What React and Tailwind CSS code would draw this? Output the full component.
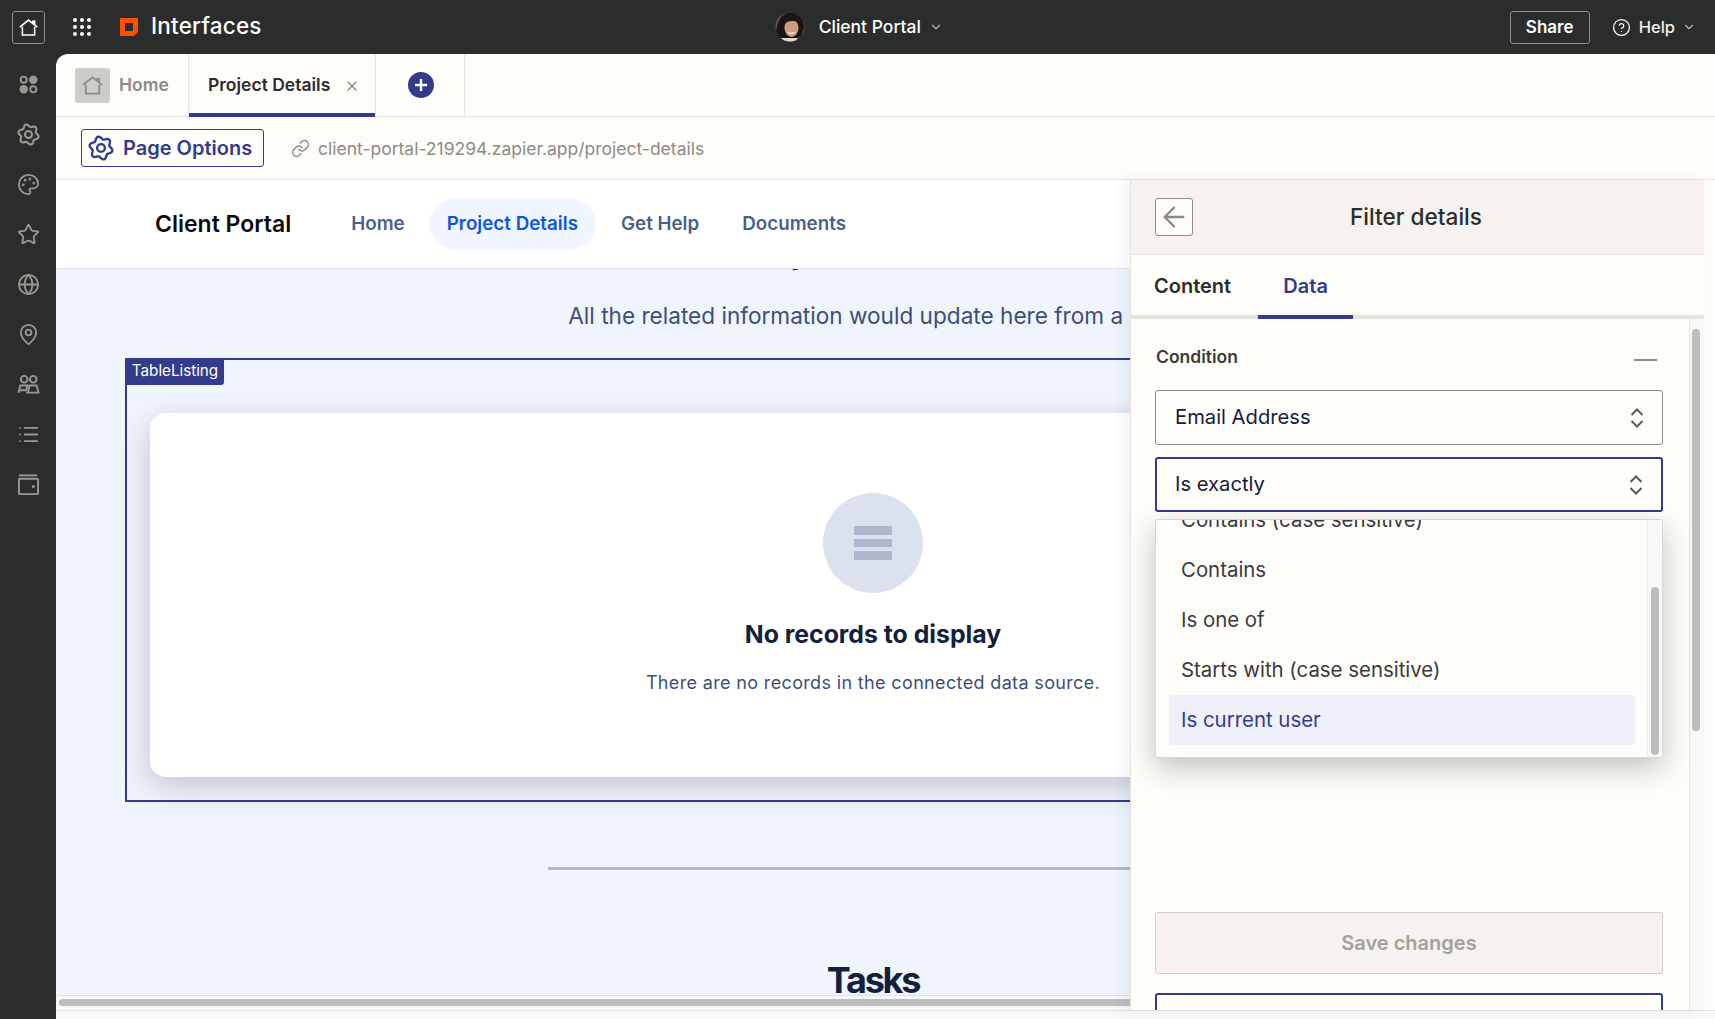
import React from 'react';
import { X, Palette, Star, Globe, MapPin, List, Link, ChevronDown, CircleHelp, ArrowLeft } from 'lucide-react';

// wavy six lobe outline, same cog in the sidebar and on Page Options
const gearPath = (() => {
  const pts = [];
  for (let i = 0; i < 96; i++) {
    const a = (i / 96) * Math.PI * 2;
    const r = 9.4 + 1.4 * Math.cos(6 * a + Math.PI / 2 * 3);
    pts.push(`${(12 + r * Math.cos(a)).toFixed(2)} ${(12 + r * Math.sin(a)).toFixed(2)}`);
  }
  return `M${pts.join('L')}Z`;
})();

const GearIcon = ({ className }) => (
  <svg viewBox="0 0 24 24" fill="none" stroke="currentColor" strokeWidth="2.2" strokeLinejoin="round" className={className}>
    <path d={gearPath} />
    <circle cx="12" cy="12" r="3.6" />
  </svg>
);

const HomeIcon = ({ className }) => (
  <svg viewBox="0 0 24 24" fill="none" stroke="currentColor" strokeWidth="1.8" strokeLinejoin="miter" className={className}>
    <path d="M5 11v9.5h14V11" />
    <path d="M2 11.5 12 3.5l5 4V5h2v4l3 2.5" />
  </svg>
);

const AppsIcon = ({ className }) => (
  <svg viewBox="0 0 24 24" className={className}>
    <circle cx="7" cy="7" r="3.2" fill="none" stroke="currentColor" strokeWidth="2" />
    <circle cx="17" cy="7" r="4.4" fill="currentColor" />
    <circle cx="7" cy="17" r="4.4" fill="currentColor" />
    <circle cx="17" cy="17" r="3.2" fill="none" stroke="currentColor" strokeWidth="2" />
  </svg>
);

const PeopleIcon = ({ className }) => (
  <svg viewBox="0 0 24 24" fill="none" stroke="currentColor" strokeWidth="2" className={className}>
    <circle cx="7.5" cy="6.5" r="3.5" />
    <circle cx="17" cy="6.5" r="3.5" />
    <path d="M1.5 20.5 3.5 13h7.5l-1.5 5H3" />
    <path d="M9.5 20.5h13L20.5 13H13l-1.5 7" />
  </svg>
);

const WalletIcon = ({ className }) => (
  <svg viewBox="0 0 24 24" fill="none" stroke="currentColor" strokeWidth="2" className={className}>
    <path d="M2 2.5h19" />
    <rect x="2" y="6" width="20" height="16" rx="1" />
    <circle cx="17" cy="14" r="1.6" fill="currentColor" stroke="none" />
  </svg>
);

const ZapierLogo = () => (
  <svg viewBox="0 0 18 18" className="w-[18px] h-[18px]">
    <path fill="#ff4f00" d="M0 0h18v14l-4 4H0z" />
    <rect x="5" y="5" width="8" height="8" fill="#2b2d2c" />
  </svg>
);

const Avatar = () => (
  <svg viewBox="0 0 30 30" className="w-[30px] h-[30px] shrink-0">
    <defs>
      <clipPath id="avatarClip"><circle cx="15" cy="15" r="14.5" /></clipPath>
    </defs>
    <g clipPath="url(#avatarClip)">
      <rect width="30" height="30" fill="#59605d" />
      <path d="M1 28C0 12 5 1 16 0c10 0 13 8 13 16l-3 9-22 5z" fill="#1d1413" />
      <ellipse cx="16.5" cy="16" rx="7" ry="9" fill="#cf9c82" />
      <path d="M9 12c3-3 9-4 14-2l-2-6H11z" fill="#1d1413" />
      <path d="M12.5 19.5c2 1.5 6 1.5 8 0-1 3.6-7 3.6-8 0z" fill="#f6efea" />
      <rect x="6" y="26" width="16" height="5" fill="#dcd8d4" />
    </g>
  </svg>
);

const UpDown = () => (
  <svg viewBox="0 0 14 22" fill="none" stroke="#5c5b58" strokeWidth="2" className="w-[14px] h-[22px] shrink-0">
    <path d="M1.5 8 7 2.5 12.5 8" />
    <path d="M1.5 14 7 19.5 12.5 14" />
  </svg>
);

const sideIcons = [AppsIcon, GearIcon, Palette, Star, Globe, MapPin, PeopleIcon, List, WalletIcon];
const options = ['Contains (case sensitive)', 'Contains', 'Is one of', 'Starts with (case sensitive)'];

const TopBar = () => (
  <div className="h-[54px] shrink-0 flex items-center text-white relative">
    <div className="ml-3 w-[33px] h-[33px] border border-[#8f8e8a] rounded-[3px] flex items-center justify-center">
      <HomeIcon className="w-[21px] h-[21px]" />
    </div>
    <div className="ml-7 grid grid-cols-3 gap-[3px] w-[18px]">
      {Array.from({ length: 9 }).map((_, i) => (
        <span key={i} className="w-1 h-1 rounded-full bg-white" />
      ))}
    </div>
    <div className="ml-[29px]"><ZapierLogo /></div>
    <span className="ml-[13px] -mt-[3px] text-[22.5px] font-medium tracking-[0.2px]">Interfaces</span>
    <div className="ml-[513px] flex items-center">
      <Avatar />
      <span className="ml-[14px] mt-px text-[17.5px] font-medium">Client Portal</span>
      <ChevronDown size={14} className="ml-2 text-[#b5b3ae]" />
    </div>
    <div className="ml-auto flex items-center pr-[19px]">
      <div className="w-[80px] h-[33px] pt-px border border-[#8f8e8a] rounded-[3px] flex items-center justify-center text-[17px] font-semibold">Share</div>
      <CircleHelp size={19} strokeWidth={1.6} className="ml-[22px]" />
      <span className="ml-2 text-[16.5px] font-medium text-[#f1efeb]">Help</span>
      <ChevronDown size={14} className="ml-[7px] text-[#b5b3ae]" />
    </div>
  </div>
);

const Sidebar = () => (
  <div className="w-[56px] shrink-0 flex flex-col items-center pt-[19px] gap-[27px] pl-px">
    {sideIcons.map((Icon, i) => (
      <Icon key={i} className="w-[23px] h-[23px] text-[#9b9892]" strokeWidth={1.9} />
    ))}
  </div>
);

const PageTabs = () => (
  <div className="h-[63px] shrink-0 flex border-b border-[#e4e3df]">
    <div className="w-[133px] flex items-center border-r border-[#e4e3df] pl-[19px]">
      <div className="w-[35px] h-[35px] bg-[#cdccc9] rounded-[3px] flex items-center justify-center text-[#8c8b88]">
        <HomeIcon className="w-[23px] h-[23px]" />
      </div>
      <span className="ml-[9px] text-[17.5px] font-semibold text-[#8c8b88]">Home</span>
    </div>
    <div className="w-[186px] flex items-center border-b-4 border-[#343b8a] pl-[19px] pt-1 -mb-px">
      <span className="text-[17.5px] font-semibold text-[#2b2d2c]">Project Details</span>
      <X size={16} strokeWidth={2} className="ml-[14px] text-[#8c8b88]" />
    </div>
    <div className="w-[90px] flex items-center justify-center border-l border-r border-[#e4e3df] pl-px">
      <div className="w-[26px] h-[26px] rounded-full bg-[#343b8a] flex items-center justify-center text-white">
        <svg viewBox="0 0 14 14" className="w-[14px] h-[14px]"><path d="M7 1v12M1 7h12" stroke="currentColor" strokeWidth="2.4" /></svg>
      </div>
    </div>
  </div>
);

const OptionsRow = () => (
  <div className="h-[63px] shrink-0 flex items-center border-b border-[#e4e3df] pl-[25px]">
    <div className="w-[183px] h-[38px] border-[1.5px] border-[#343b8a] rounded-[3px] flex items-center pl-[6px] text-[#343b8a]">
      <GearIcon className="w-[26px] h-[26px]" />
      <span className="ml-[9px] text-[20px] font-semibold">Page Options</span>
    </div>
    <Link size={19} strokeWidth={2} className="ml-[27px] text-[#97958f]" />
    <span className="ml-[8px] mt-[3px] text-[17.5px] text-[#8c8b88]">client-portal-219294.zapier.app/project-details</span>
  </div>
);

const SiteNav = () => (
  <div className="h-[89px] shrink-0 bg-white border-b border-[#dde3ee] flex items-center pl-[99px] text-[18.8px] font-semibold text-[#4a5f8a]">
    <span className="text-[23px] text-[#0b0b0b] mr-[60px]">Client Portal</span>
    <span>Home</span>
    <span className="ml-[24px] h-[50px] px-[18px] rounded-full bg-[#f0f5ff] text-[#0b57e0] flex items-center">Project Details</span>
    <span className="ml-[25px]">Get Help</span>
    <span className="ml-[43px]">Documents</span>
  </div>
);

const PageContent = () => (
  <div className="flex-1 min-h-0 overflow-hidden bg-[#f0f4fc]">
    <div className="w-[1634px] text-center text-[#14213d]">
      <h1 className="-mt-[41px] pr-[22px] text-[36px] leading-[44px] font-bold">Project Details</h1>
      <p className="mt-7 pr-[18px] text-[22.6px] leading-8 text-[#3b4f7a]">All the related information would update here from a list</p>

      <div className="relative mt-[26px] ml-[69px] w-[1496px] h-[444px] border-2 border-[#343b8a] pt-[53px] pl-[23px] pr-[23px]">
        <div className="absolute -top-0.5 -left-0.5 w-[99px] h-[27px] pl-px bg-[#343b8a] rounded-br-[3px] flex items-center justify-center text-[15.2px] text-white">TableListing</div>
        <div className="h-[364px] bg-white rounded-[16px] shadow-[-2px_10px_30px_rgba(30,40,70,0.22)] pt-[80px] flex flex-col items-center">
          <div className="w-[100px] h-[100px] rounded-full bg-[#dce1ee] flex flex-col items-center justify-center gap-1">
            <span className="w-[38px] h-[8.5px] bg-[#aeb7cc]" />
            <span className="w-[38px] h-[8.5px] bg-[#aeb7cc]" />
            <span className="w-[38px] h-[8.5px] bg-[#aeb7cc]" />
          </div>
          <h2 className="mt-[25px] text-[24.8px] leading-8 font-bold">No records to display</h2>
          <p className="mt-[19px] text-[18px] leading-[28px] tracking-[0.35px] text-[#3b4f7a]">There are no records in the connected data source.</p>
        </div>
      </div>

      <div className="mt-[65px] mx-auto w-[651px] h-[3px] bg-[#aeb7cc]" />
      <h2 className="mt-[88px] text-[36px] leading-[44px] font-bold tracking-[-2.2px]">Tasks</h2>
    </div>
  </div>
);

const SelectBox = ({ label, focused }) => (
  <div className={`w-[508px] h-[55px] rounded-[3px] flex items-center justify-between pr-[18px] text-[20.2px] text-[#14213d] ${focused ? 'border-2 border-[#343b8a] pl-[18px]' : 'border border-[#8c8b88] pl-[19px]'}`}>
    <span>{label}</span>
    <UpDown />
  </div>
);

const Dropdown = () => (
  <div className="absolute left-[24px] top-[200px] w-[508px] h-[239px] bg-[#fffdf9] border border-[#d8d7d3] rounded-[3px] shadow-[0_10px_28px_rgba(40,40,35,0.28)] overflow-hidden flex">
    <div className="flex-1 min-w-0 pl-[13px] pr-3">
      <div className="-mt-[25px] text-[20.4px] text-[#3a3b39]">
        {options.map(o => (
          <div key={o} className="h-[50px] flex items-center pl-3">{o}</div>
        ))}
        <div className="h-[50px] flex items-center pl-3 rounded-[3px] bg-[#eeeff9] text-[#343b8a]">Is current user</div>
      </div>
    </div>
    <div className="w-[15px] shrink-0 bg-[#f7f8f8] border-l border-[#ebeae7] flex flex-col justify-end pb-[2px] items-center">
      <div className="w-2 h-[168px] rounded-full bg-[#bdbdbd]" />
    </div>
  </div>
);

const FilterPanel = () => (
  <div className="relative w-[574px] shrink-0 flex flex-col bg-[#fffdf9] border-l border-[#e4e3df] shadow-[-6px_0_14px_rgba(40,40,35,0.06)]">
    <div className="h-[75px] shrink-0 bg-[#f5f2ef] border-b border-[#e4e3df] flex items-center relative">
      <div className="ml-[24px] w-[38px] h-[38px] bg-[#fffdf9] border border-[#8c8b88] rounded-[3px] flex items-center justify-center text-[#8c8b88]">
        <ArrowLeft size={32} strokeWidth={1.7} />
      </div>
      <span className="ml-[157px] text-[22.6px] font-medium text-[#2b2d2c]">Filter details</span>
    </div>
    <div className="h-[64px] shrink-0 flex border-b-4 border-[#e4e3df] pt-[2px] text-[20px] font-semibold">
      <div className="pl-[23px] pr-[27px] flex items-center text-[#2b2d2c]">Content</div>
      <div className="w-[95px] -mb-1 -mt-[2px] pt-[2px] border-b-4 border-[#343b8a] flex items-center justify-center text-[#343b8a]">Data</div>
    </div>
    <div className="flex-1 min-h-0 flex">
      <div className="relative flex-1 min-w-0 overflow-hidden pl-[24px] pt-[26px]">
        <div className="flex items-center justify-between w-[502px] h-6">
          <span className="ml-px text-[17.5px] font-semibold text-[#3a3b39]">Condition</span>
          <span className="mt-[6px] w-[23px] h-[2px] bg-[#8c8b88]" />
        </div>
        <div className="mt-[21px] flex flex-col gap-3">
          <SelectBox label="Email Address" />
          <SelectBox label="Is exactly" focused />
        </div>
        <div className="mt-[400px] w-[508px] h-[62px] bg-[#f5f2ef] border border-[#cdccc9] rounded-[3px] flex items-center justify-center text-[20px] font-semibold text-[#a3a19c]">Save changes</div>
        <div className="mt-[19px] w-[508px] h-[40px] border-2 border-[#343b8a] rounded-[3px]" />
        <Dropdown />
      </div>
      <div className="w-[15px] shrink-0 bg-[#f7f8f8] border-l border-[#e4e3df] pt-[10px] pl-[2px]">
        <div className="w-2 h-[402px] rounded-full bg-[#bdbdbd]" />
      </div>
    </div>
  </div>
);

const App = () => {
  return (
    <div className="h-screen w-screen overflow-hidden flex flex-col bg-[#2b2d2c] font-['Inter',sans-serif]">
      <TopBar />
      <div className="flex-1 min-h-0 flex">
        <Sidebar />
        <div className="flex-1 min-w-0 flex flex-col rounded-tl-[12px] overflow-hidden bg-[#fffdf9]">
          <PageTabs />
          <OptionsRow />
          <div className="flex-1 min-h-0 flex">
            <div className="w-[1074px] shrink-0 flex flex-col">
              <SiteNav />
              <PageContent />
              <div className="h-[15px] shrink-0 bg-[#f7f8f8] border-t border-[#dfe1e3] pl-[3px] pt-[3px]">
                <div className="h-[7px] rounded-l-full bg-[#bdbdbd]" />
              </div>
            </div>
            <FilterPanel />
          </div>
          <div className="h-[9px] shrink-0 bg-[#f7f8f8] border-t border-[#e4e3df]" />
        </div>
      </div>
    </div>
  );
};

export default App;
